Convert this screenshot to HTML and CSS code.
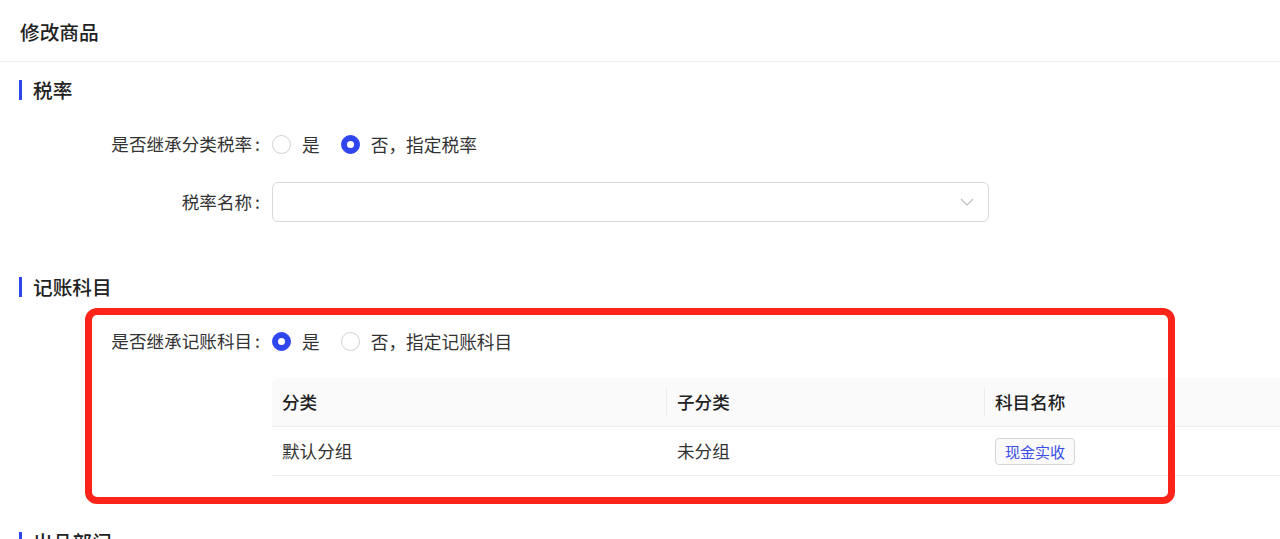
FILE: index.html
```html
<!DOCTYPE html>
<html lang="zh-CN">
<head>
<meta charset="utf-8">
<title>修改商品</title>
<link rel="stylesheet" href="styles.css">
</head>
<body>
<div class="page">
  <div class="header"><span class="title">修改商品</span></div>

  <div class="section-title first"><span class="bar"></span>税率</div>

  <div class="row r1">
    <div class="label">是否继承分类税率<span class="colon">:</span></div>
    <div class="control radios">
      <label class="radio"><span class="dot"></span><span class="rtext">是</span></label>
      <label class="radio checked"><span class="dot"></span><span class="rtext">否，指定税率</span></label>
    </div>
  </div>

  <div class="row r2">
    <div class="label">税率名称<span class="colon">:</span></div>
    <div class="control">
      <div class="select">
        <svg class="chev" width="14" height="8" viewBox="0 0 14 8"><path d="M1 1 L7 7 L13 1" fill="none" stroke="#bfbfbf" stroke-width="1.2"/></svg>
      </div>
    </div>
  </div>

  <div class="section-title second"><span class="bar"></span>记账科目</div>

  <div class="row r3">
    <div class="label">是否继承记账科目<span class="colon">:</span></div>
    <div class="control radios">
      <label class="radio checked"><span class="dot"></span><span class="rtext">是</span></label>
      <label class="radio"><span class="dot"></span><span class="rtext">否，指定记账科目</span></label>
    </div>
  </div>

  <div class="table">
    <div class="thead">
      <div class="cell c1">分类</div>
      <div class="cell c2 div">子分类</div>
      <div class="cell c3 div">科目名称</div>
    </div>
    <div class="trow">
      <div class="cell c1">默认分组</div>
      <div class="cell c2">未分组</div>
      <div class="cell c3"><span class="tag">现金实收</span></div>
    </div>
  </div>

  <div class="section-title third"><span class="bar"></span>出品部门</div>

  <div class="highlight"></div>
</div>
</body>
</html>
```

FILE: styles.css
```css
html, body {
  margin: 0;
  padding: 0;
  background: #fff;
}
body {
  font-family: "Noto Sans CJK SC", "Noto Sans", sans-serif;
  color: #333;
}
.page {
  position: relative;
  width: 1280px;
  height: 539px;
  overflow: hidden;
}
.header {
  height: 62px;
  border-bottom: 1px solid #f0f0f0;
  box-sizing: border-box;
  padding-left: 20px;
  display: flex;
  align-items: center;
}
.title {
  font-size: 19.7px;
  font-weight: 500;
  color: #222;
  line-height: 24px;
  margin-top: 3px;
}
.section-title {
  display: flex;
  align-items: center;
  height: 22px;
  font-size: 19.7px;
  font-weight: 500;
  color: #222;
  padding-left: 19px;
  line-height: 22px;
}
.section-title .bar {
  width: 3px;
  height: 20px;
  background: #2f45ee;
  margin-right: 11px;
}
.section-title.first { margin-top: 17px; }
.section-title.second { margin-top: 54px; }
.section-title.third { margin-top: 55px; }

.row {
  display: flex;
  align-items: center;
  height: 40px;
}
.row.r1 { margin-top: 23px; }
.row.r2 { margin-top: 18px; }
.row.r3 { margin-top: 23px; }
.label {
  width: 262px;
  text-align: right;
  font-size: 17.6px;
  color: #333;
  line-height: 24px;
  box-sizing: border-box;
  padding-right: 2px;
}
.colon {
  margin-left: 3px;
}
.control {
  margin-left: 10px;
}
.radios {
  display: flex;
  align-items: center;
}
.radio {
  display: flex;
  align-items: center;
  margin-right: 21px;
}
.radio .dot {
  width: 19px;
  height: 19px;
  box-sizing: border-box;
  border: 1px solid #d0d0d0;
  border-radius: 50%;
  background: #fff;
  display: flex;
  align-items: center;
  justify-content: center;
}
.radio.checked .dot {
  border-color: #2f45ee;
  background: #2f45ee;
}
.radio.checked .dot::after {
  content: "";
  width: 7px;
  height: 7px;
  border-radius: 50%;
  background: #fff;
}
.rtext {
  margin-left: 11px;
  font-size: 17.7px;
  line-height: 24px;
  color: #333;
}
.select {
  width: 717px;
  height: 40px;
  box-sizing: border-box;
  border: 1px solid #d9d9d9;
  border-radius: 6px;
  display: flex;
  align-items: center;
  justify-content: flex-end;
  padding-right: 14px;
}
.table {
  margin-top: 17px;
  margin-left: 272px;
  width: 1040px;
}
.thead, .trow {
  display: flex;
  height: 49px;
  border-bottom: 1px solid #efefef;
  box-sizing: border-box;
}
.thead {
  background: #fafafa;
  border-top-left-radius: 8px;
  font-weight: 500;
  color: #222;
}
.cell {
  position: relative;
  display: flex;
  align-items: center;
  font-size: 17.6px;
  line-height: 24px;
  box-sizing: border-box;
  padding-left: 10px;
}
.c1 { width: 394px; }
.c2 { width: 318px; padding-left: 11px; }
.c3 { flex: 1; padding-left: 11px; }
.thead .cell.div::before {
  content: "";
  position: absolute;
  left: 0;
  top: 10px;
  bottom: 10px;
  width: 1px;
  background: #ececec;
}
.trow .cell { color: #333; }
.tag {
  display: inline-block;
  height: 27px;
  line-height: 25px;
  box-sizing: border-box;
  padding: 0 9px;
  border: 1px solid #d6d6d6;
  border-radius: 4px;
  background: #fafafa;
  color: #3a4ee6;
  font-size: 15px;
}
.highlight {
  position: absolute;
  left: 85px;
  top: 308px;
  width: 1090px;
  height: 196px;
  box-sizing: border-box;
  border: 7px solid #fe2419;
  border-radius: 12px;
  pointer-events: none;
}
```
